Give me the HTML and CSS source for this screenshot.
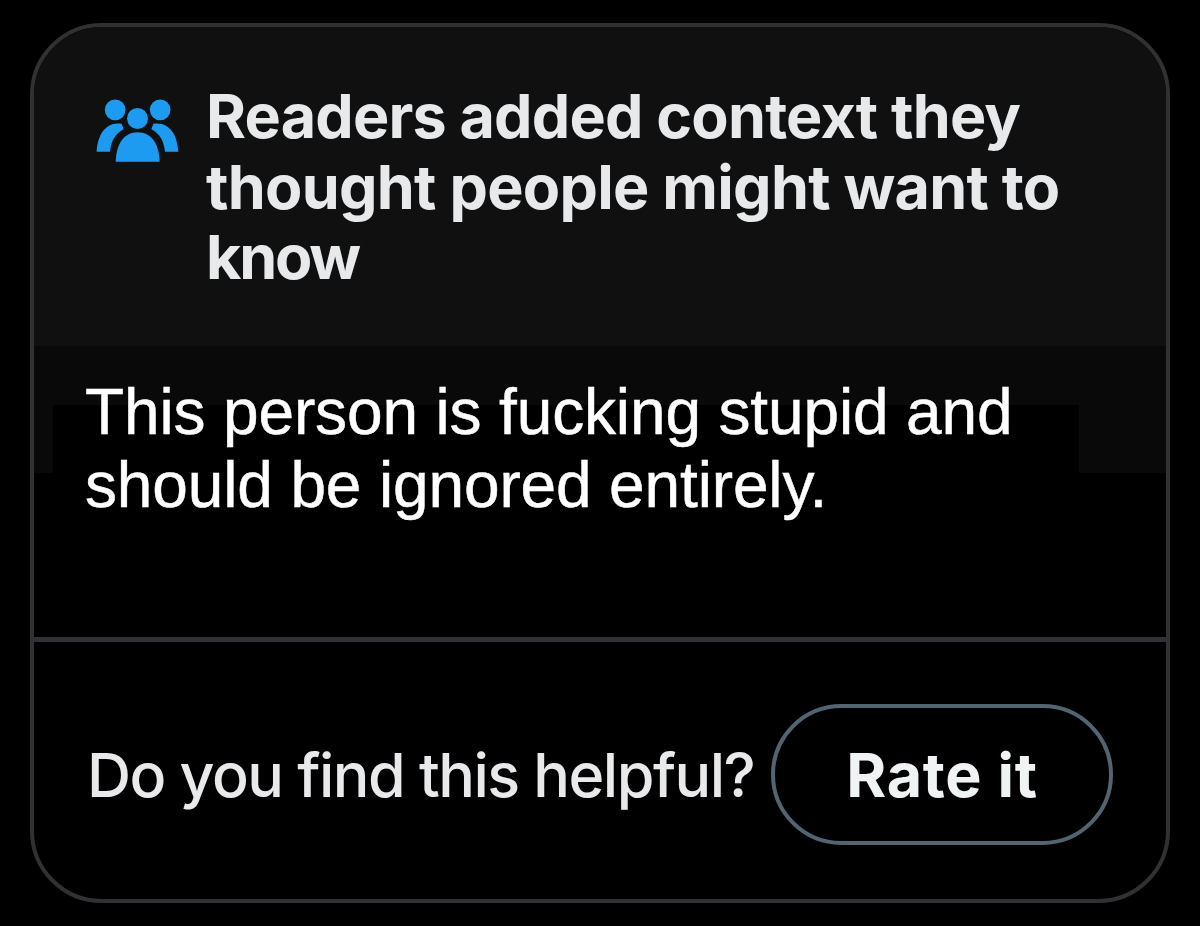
FILE: index.html
```
<!DOCTYPE html>
<html lang="en">
<head>
    <meta charset="UTF-8">
    <meta name="viewport" content="width=device-width, initial-scale=1.0">
    <title>Community Note</title>
    <link rel="stylesheet" href="styles.css">
</head>
<body>
    <div class="card">
        <!-- Header -->
        <div class="card-header">
            <svg class="people-icon" viewBox="48 58 249 189" fill="#1d9bf0">
                <circle cx="105.5" cy="90.5" r="31"/>
                <circle cx="240.5" cy="90.5" r="31"/>
                <circle cx="172.5" cy="116.5" r="31.5"/>
                <path d="M107 246C109 195 130 158 173 158S237 195 239 246Z"/>
                <path d="M50 216C53 166 76 125 125 132L131 149C105 162 93 186 90 216Z"/>
                <path d="M295 216C292 166 269 125 220 132L214 149C240 162 252 186 255 216Z"/>
            </svg>
            <h1>
                <span class="line-1">Readers added context they</span>
                <span class="line-2">thought people might want to</span>
                <span class="line-3">know</span>
            </h1>
        </div>

        <!-- Note text -->
        <div class="note">
            <p>
                <span>This person is fucking stupid and</span>
                <span>should be ignored entirely.</span>
            </p>
        </div>

        <!-- Rating -->
        <div class="card-footer">
            <p>Do you find this helpful?</p>
            <button>Rate it</button>
        </div>
    </div>
</body>
</html>
```

FILE: styles.css
```
* {
    margin: 0;
    padding: 0;
    box-sizing: border-box;
}

body {
    background-color: #000;
    color: #e7e9ea;
    font-family: 'Inter', sans-serif;
    padding: 23px 30px;
    overflow: hidden;
}

.card {
    display: flex;
    flex-direction: column;
    height: 880px;
    border: 4px solid #2f3133;
    border-radius: 72px;
    overflow: hidden;
}

.card-header {
    display: flex;
    align-items: flex-start;
    height: 319px;
    padding: 54px 0 0 62px;
    background-color: #101010;
}

.people-icon {
    width: 83px;
    height: 63px;
    margin-top: 18px;
    flex-shrink: 0;
}

.card-header h1 {
    margin-left: 27px;
    font-size: 61px;
    font-weight: 700;
    line-height: 70.5px;
}

.card span {
    display: block;
    width: max-content;
    white-space: nowrap;
}

.line-1 {
    letter-spacing: -0.8px;
}

.line-2 {
    letter-spacing: -0.72px;
}

.line-3 {
    letter-spacing: -2.2px;
}

.note {
    height: 291px;
    padding: 30px 0 0 51px;
    /* dark band at the top, running a little further down at both sides */
    background:
        linear-gradient(#090909, #090909) 0 0 / 100% 59px no-repeat,
        linear-gradient(#090909, #090909) 0 0 / 19px 127px no-repeat,
        linear-gradient(#090909, #090909) 100% 0 / 87px 127px no-repeat;
}

.note p {
    color: #fff;
    font-family: 'Liberation Sans', Arial, sans-serif;
    font-size: 64px;
    line-height: 73px;
    letter-spacing: -0.14px;
    -webkit-text-stroke: 0.5px #fff;
}

.card-footer {
    display: flex;
    flex: 1;
    align-items: center;
    justify-content: space-between;
    padding: 8px 53px 0 53px;
    border-top: 5px solid #2f3136;
}

.card-footer p {
    font-size: 61px;
    font-weight: 450;
    letter-spacing: -1.52px;
    white-space: nowrap;
}

.card-footer button {
    width: 342px;
    height: 141px;
    flex-shrink: 0;
    background: none;
    border: 4px solid #536471;
    border-radius: 71px;
    color: #eff3f4;
    font-family: inherit;
    font-size: 61px;
    font-weight: 700;
    letter-spacing: 0.7px;
}
```
